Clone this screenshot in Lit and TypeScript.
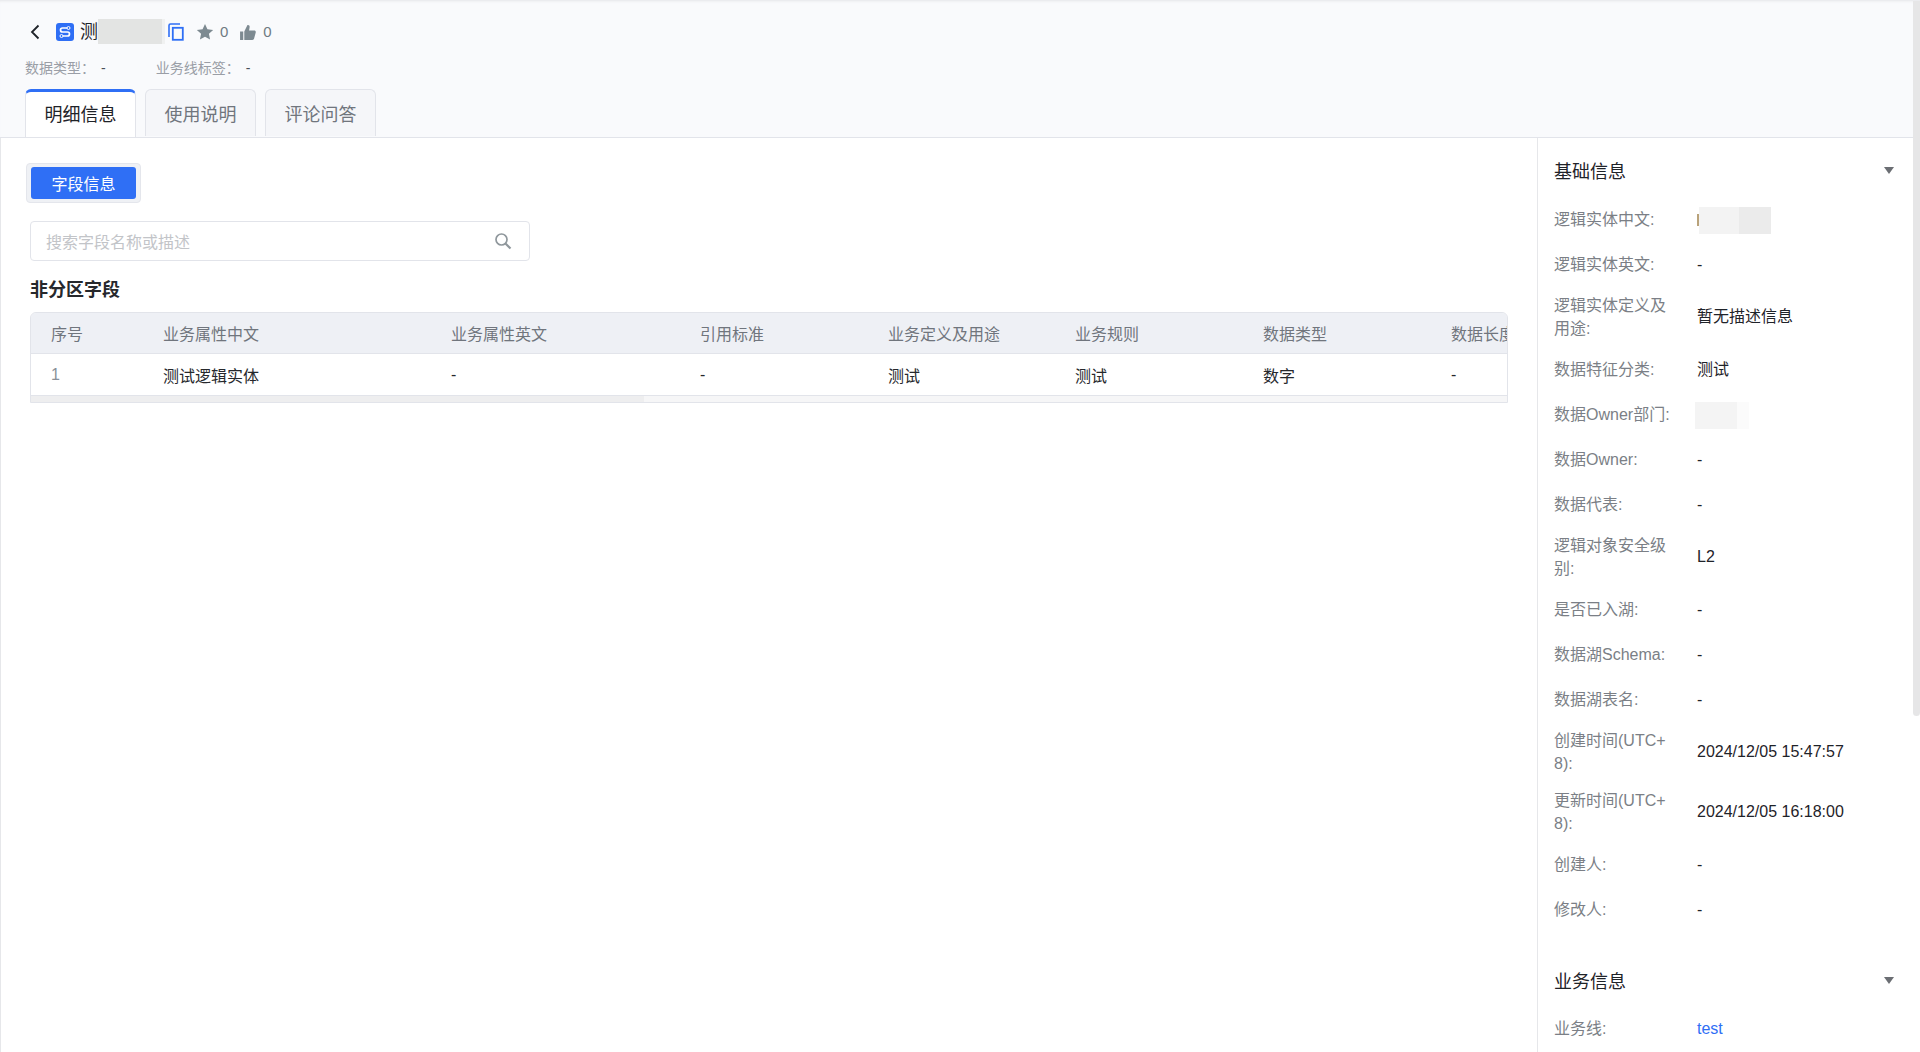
import { LitElement, html, css } from "lit";
import { customElement } from "lit/decorators.js";

const cols = [
  { t: "序号", w: 112, v: "1", c: "idx" },
  { t: "业务属性中文", w: 288, v: "测试逻辑实体" },
  { t: "业务属性英文", w: 249, v: "-" },
  { t: "引用标准", w: 188, v: "-" },
  { t: "业务定义及用途", w: 187, v: "测试" },
  { t: "业务规则", w: 188, v: "测试" },
  { t: "数据类型", w: 188, v: "数字" },
  { t: "数据长度", w: 188, v: "-" },
];

const basic: [string, unknown][] = [
  ["逻辑实体中文:", html`<span class="sliver"></span><span class="blur b1"></span>`],
  ["逻辑实体英文:", "-"],
  ["逻辑实体定义及用途:", "暂无描述信息"],
  ["数据特征分类:", "测试"],
  ["数据Owner部门:", html`<span class="blur b2"></span>`],
  ["数据Owner:", "-"],
  ["数据代表:", "-"],
  ["逻辑对象安全级别:", "L2"],
  ["是否已入湖:", "-"],
  ["数据湖Schema:", "-"],
  ["数据湖表名:", "-"],
  ["创建时间(UTC+8):", "2024/12/05 15:47:57"],
  ["更新时间(UTC+8):", "2024/12/05 16:18:00"],
  ["创建人:", "-"],
  ["修改人:", "-"],
];

@customElement("app-root")
export class AppRoot extends LitElement {
  static styles = css`
    :host {
      display: block;
      height: 1052px;
      overflow: hidden;
      background: #fff;
      font-family: "Liberation Sans", "Noto Sans CJK SC", sans-serif;
      font-size: 16px;
      color: #1f2329;
    }
    .page { display: flex; flex-direction: column; height: 1052px; }
    .head {
      height: 137px;
      flex: none;
      background: #f9fafc;
      border-bottom: 1px solid #e2e4ea;
      box-sizing: content-box;
      padding-left: 25px;
      display: flex;
      flex-direction: column;
      box-shadow: inset 0 3px 3px -2px #e4e5e8;
    }
    .title { display: flex; align-items: center; height: 32px; margin-top: 16px; }
    .back { margin-left: 3px; width: 14px; height: 18px; }
    .logo { margin-left: 14px; width: 18px; height: 18px; }
    .name { margin-left: 6px; font-size: 18px; width: 18px; line-height: 24px; }
    .title .blur { width: 67px; height: 25px; background: linear-gradient(90deg, #e3e4e3 95%, #f0f1f1 95%); margin-right: 2px; }
    .copy { margin-left: 1px; width: 16px; height: 18px; }
    .stat { display: flex; align-items: center; gap: 6px; color: #6f7a82; font-size: 15px; }
    .stat svg { width: 18px; height: 18px; }
    .stat.s1 { margin-left: 12px; }
    .stat.s2 { margin-left: 11px; }
    .meta { display: flex; margin-top: 8px; height: 24px; align-items: center; color: #9a9ea6; font-size: 14px; }
    .meta b { font-weight: 400; color: #4a4f57; margin-left: 6px; }
    .meta span.m2 { margin-left: 50px; }
    .tabs { display: flex; margin-top: 10px; gap: 9px; height: 48px; }
    .tab {
      width: 111px;
      height: 47px;
      box-sizing: border-box;
      background: #f5f6f9;
      border: 1px solid #e2e4ea;
      border-bottom: none;
      border-radius: 6px 6px 0 0;
      font-size: 18px;
      color: #70757d;
      display: flex;
      align-items: center;
      justify-content: center;
    }
    .tab.on {
      height: 48px;
      background: #fff;
      color: #1f2329;
      border-top: 3px solid #2f6ff5;
      padding-bottom: 3px;
      position: relative;
      z-index: 1;
    }
    .body { flex: 1; display: flex; min-height: 0; border-left: 1px solid #e6e7ea; }
    .main { width: 1537px; flex: none; box-sizing: border-box; padding: 25px 29px 0 25px; border-right: 1px solid #e6e7ea; }
    .seg {
      display: inline-flex;
      padding: 3px 4px;
      border: 1px solid #e4e6ec;
      border-radius: 4px;
      background: #eff1f5;
    }
    .seg span {
      width: 105px;
      height: 32px;
      background: #2f6ff5;
      color: #fff;
      border-radius: 3px;
      display: flex;
      align-items: center;
      justify-content: center;
      font-size: 16px;
    }
    .search {
      margin: 18px 0 0 4px;
      width: 500px;
      height: 40px;
      box-sizing: border-box;
      border: 1px solid #e2e4ea;
      border-radius: 4px;
      display: flex;
      align-items: center;
      justify-content: space-between;
      padding: 0 17px 0 15px;
      color: #c2c4c8;
      font-size: 16px;
    }
    .search svg { width: 18px; height: 18px; }
    h3 { margin: 17px 0 0 4px; font-size: 18px; font-weight: 700; color: #26282c; line-height: 24px; }
    .table {
      margin: 10px 0 0 4px;
      width: 1478px;
      height: 91px;
      box-sizing: border-box;
      border: 1px solid #e2e4ea;
      border-radius: 6px 6px 0 0;
      overflow: hidden;
      background: #f6f6f7;
      position: relative;
    }
    .row { display: flex; width: max-content; height: 41px; border-bottom: 1px solid #e2e4ea; box-sizing: content-box; }
    .row.h { height: 40px; background: #eef0f5; color: #70757d; }
    .row.d { background: #fff; color: #26282c; }
    .cell { padding-left: 20px; box-sizing: border-box; display: flex; align-items: center; flex: none; white-space: nowrap; }
    .cell.idx { color: #8a9098; }
    .thumb { position: absolute; left: 0; bottom: 0; width: 613px; height: 6px; background: #eeeeef; }
    .aside { flex: 1; box-sizing: border-box; padding: 19px 0 0 16px; min-width: 0; }
    .sec { display: flex; align-items: center; justify-content: space-between; height: 26px; width: 340px; font-size: 18px; color: #1f2329; }
    .caret { width: 10px; height: 7px; }
    .list { margin-top: 22px; }
    .list.second { margin-top: 21px; }
    .item { display: flex; align-items: center; min-height: 30px; margin-bottom: 15px; width: 340px; line-height: 22.5px; }
    .lab { width: 118px; flex: none; color: #7b7f86; word-break: break-all; }
    .val { flex: 1; color: #1f2329; display: flex; align-items: center; margin-left: 25px; }
    .val.link { color: #2f6ff5; }
    .blur { display: inline-block; }
    .sliver { width: 2px; height: 12px; background: #b9a27a; }
    .b1 { width: 72px; height: 27px; background: linear-gradient(90deg, #f3f3f3 55%, #ebebeb 55%); }
    .b2 { width: 54px; height: 27px; margin-left: -2px; background: linear-gradient(90deg, #f4f4f4 78%, #fbfbfb 78%); }
    .gap { height: 27px; }
    .scroll { width: 7px; flex: none; background: #e6e6e7; height: 715px; margin-top: -137px; border-radius: 0 0 4px 4px; position: relative; z-index: 2; }
    .aside-wrap { display: flex; flex: 1; min-width: 0; }
  `;

  render() {
    return html`<div class="page">
      <div class="head">
        <div class="title">
          <svg class="back" viewBox="0 0 14 18"><path d="M10.5 2.5 4 9l6.5 6.5" fill="none" stroke="#1f2329" stroke-width="1.8"/></svg>
          <svg class="logo" viewBox="0 0 18 18"><rect width="18" height="18" rx="3" fill="#2f6ff5"/><path d="M13 5H6.500a2 2 0 0 0 0 4h5a2 2 0 0 1 0 4H5" fill="none" stroke="#fff" stroke-width="1.700"/><circle cx="12.500" cy="5" r="1.500" fill="#2f6ff5" stroke="#fff"/><circle cx="5.500" cy="13" r="1.500" fill="#2f6ff5" stroke="#fff"/></svg>
          <span class="name">测</span>
          <span class="blur"></span>
          <svg class="copy" viewBox="0 0 16 18"><path d="M1 14V2.500A1.500 1.500 0 0 1 2.500 1H12" fill="none" stroke="#2f6ff5" stroke-width="1.600"/><rect x="4.800" y="4.800" width="10" height="12" fill="none" stroke="#2f6ff5" stroke-width="1.800"/></svg>
          <span class="stat s1"><svg viewBox="0 0 17 17"><path d="M8.500 1l2.300 5 5.400.6-4 3.600 1.100 5.400-4.800-2.700-4.800 2.700 1.100-5.400-4-3.600L6.200 6z" fill="#7d8a91"/></svg>0</span>
          <span class="stat s2"><svg viewBox="0 0 17 17"><path d="M1 8h3v8H1zM5 8l3-6c1.500-.3 2.300.7 2 2.200L9.500 7h5c1 0 1.600.9 1.300 1.900l-1.600 6c-.2.700-.8 1.100-1.500 1.100H5z" fill="#7d8a91"/></svg>0</span>
        </div>
        <div class="meta"><span>数据类型：<b>-</b></span><span class="m2">业务线标签：<b>-</b></span></div>
        <div class="tabs"><div class="tab on">明细信息</div><div class="tab">使用说明</div><div class="tab">评论问答</div></div>
      </div>
      <div class="body">
        <div class="main">
          <div class="seg"><span>字段信息</span></div>
          <div class="search"><span>搜索字段名称或描述</span>
            <svg viewBox="0 0 18 18"><circle cx="7.500" cy="7.500" r="5.500" fill="none" stroke="#8f979c" stroke-width="1.700"/><path d="M11.500 11.500 16.500 16.500" stroke="#8f979c" stroke-width="2.200"/></svg>
          </div>
          <h3>非分区字段</h3>
          <div class="table">
            <div class="row h">${cols.map((c) => html`<div class="cell" style="width:${c.w}px">${c.t}</div>`)}</div>
            <div class="row d">${cols.map((c) => html`<div class="cell ${c.c ?? ""}" style="width:${c.w}px">${c.v}</div>`)}</div>
            <div class="thumb"></div>
          </div>
        </div>
        <div class="aside-wrap">
          <div class="aside">
            <div class="sec"><span>基础信息</span><svg class="caret" viewBox="0 0 10 7"><path d="M0 0h10L5 7z" fill="#6b6e73"/></svg></div>
            <div class="list">
              ${basic.map(([l, v]) => html`<div class="item"><div class="lab">${l}</div><div class="val">${v}</div></div>`)}
            </div>
            <div class="gap"></div>
            <div class="sec"><span>业务信息</span><svg class="caret" viewBox="0 0 10 7"><path d="M0 0h10L5 7z" fill="#6b6e73"/></svg></div>
            <div class="list second"><div class="item"><div class="lab">业务线:</div><div class="val link">test</div></div></div>
          </div>
          <div class="scroll"></div>
        </div>
      </div>
    </div>`;
  }
}
